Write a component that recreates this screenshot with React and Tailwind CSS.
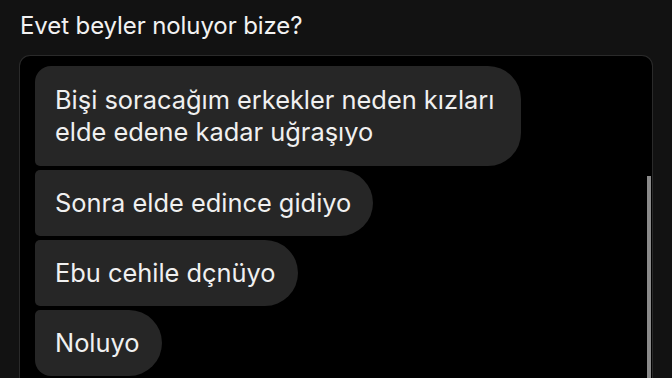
import React from 'react';

const messages = [
  { text: 'Bişi soracağım erkekler neden kızları elde edene kadar uğraşıyo', pos: 'first' },
  { text: 'Sonra elde edince gidiyo', pos: 'mid' },
  { text: 'Ebu cehile dçnüyo', pos: 'mid' },
  { text: 'Noluyo', pos: 'last' },
];

const corners = {
  first: 'rounded-tl-[16px] rounded-bl-[5px]',
  mid: 'rounded-l-[5px]',
  last: 'rounded-tl-[5px] rounded-bl-[16px]',
};

const App = () => {
  return (
    <div className="w-[672px] h-[378px] overflow-hidden bg-[#121212] font-['Inter',sans-serif]">
      <h1 className="pl-5 pt-[11px] text-[24px] leading-[30px] text-[#f2f2f2] tracking-[-0.1px]">
        Evet beyler noluyor bize?
      </h1>
      <div className="relative ml-[19px] mt-[14px] w-[634px] h-[340px] bg-black border border-[#2a2a2a] border-b-0 rounded-t-[11px] pl-[15px] pt-[10px]">
        <div className="flex flex-col items-start gap-1">
          {messages.map((m, i) => (
            <div
              key={i}
              className={`bg-[#262626] text-[#f0f0f0] text-[25.4px] leading-8 pl-5 pr-[22px] rounded-r-[33px] ${corners[m.pos]} ${
                m.pos === 'first' ? 'py-[18px] w-[486px]' : 'py-[17px]'
              }`}
            >
              {m.text}
            </div>
          ))}
        </div>
        <div className="absolute right-[1px] top-[120px] w-1 h-[230px] bg-[#8a8a8a]" />
      </div>
    </div>
  );
};

export default App;
